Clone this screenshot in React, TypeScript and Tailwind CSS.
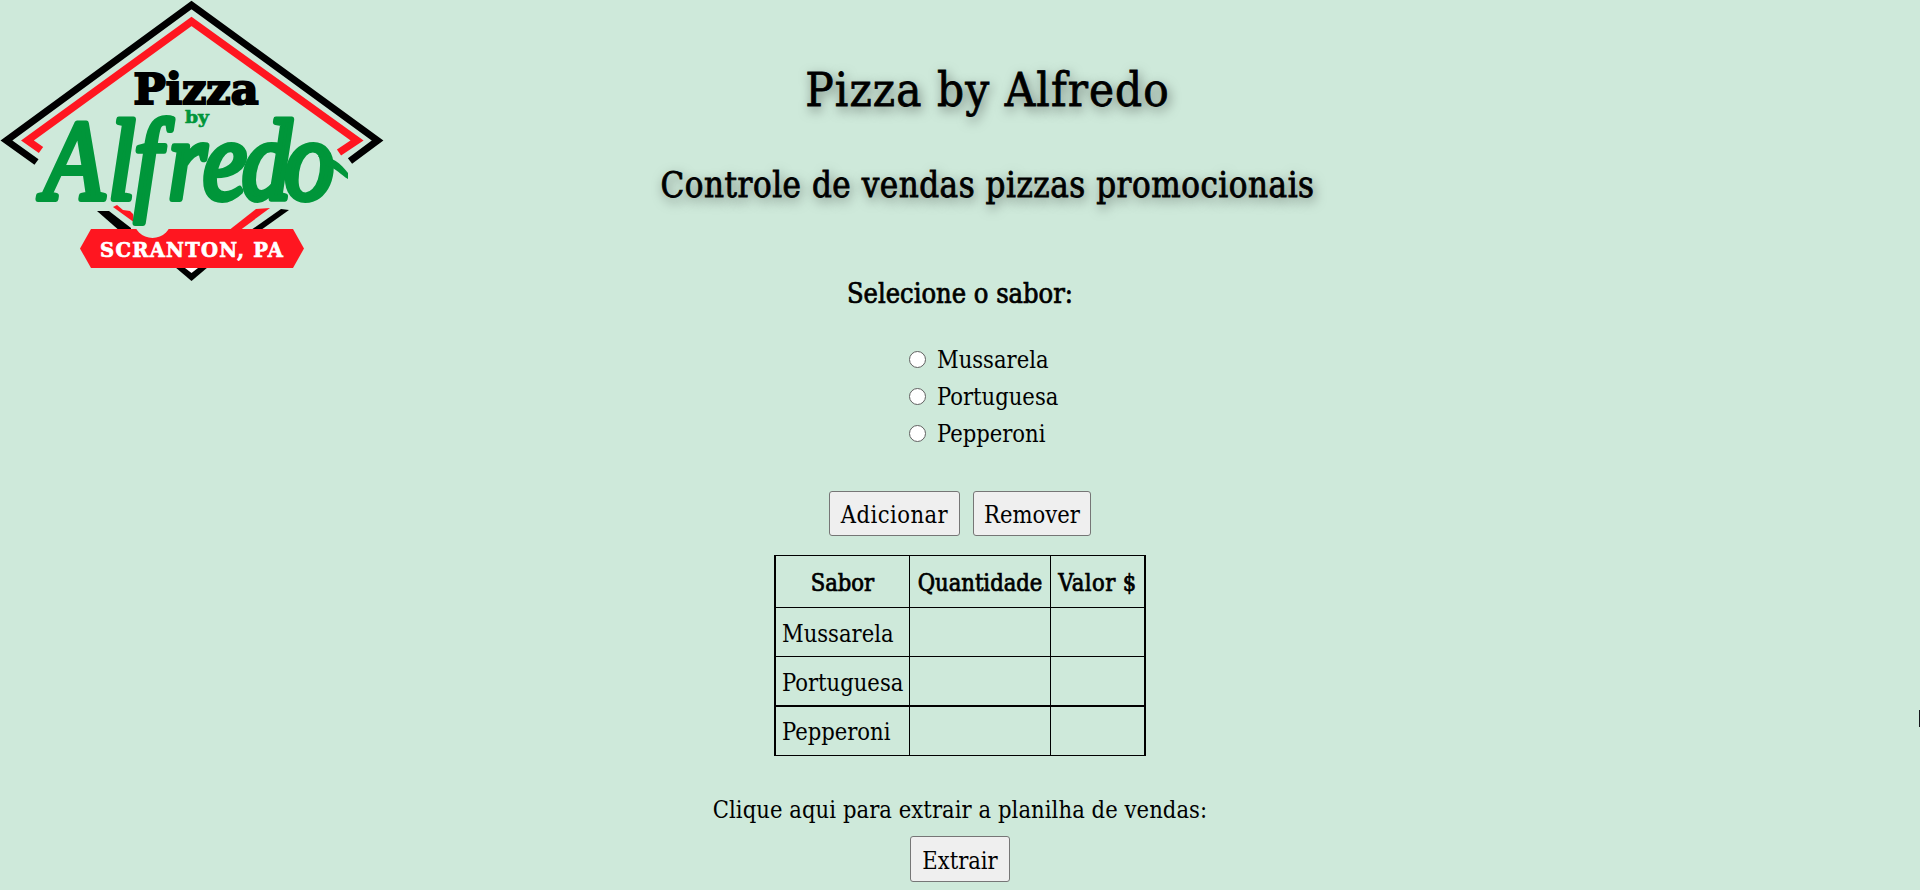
import type { ReactNode } from "react";

const flavors = ["Mussarela", "Portuguesa", "Pepperoni"];

function Logo() {
  return (
    <svg width="384" height="281" viewBox="0 0 384 281" className="block shrink-0 overflow-visible">
      <g fill="none" strokeMiterlimit="10">
        <path d="M36.5 162 L6.5 140.5 L191.500 5 L377.500 140.500 L350 161" stroke="#000" strokeWidth="7" />
        <path d="M41 150 L27.500 140.500 L191.500 21.500 L357 140.500 L339 152.500" stroke="#ff1620" strokeWidth="7.500" />
      </g>
      <path d="M97 211h12l22 17v4h-10z" fill="#000" />
      <path d="M113 207l4-2 6 5 7 1 3 3 2 9z" fill="#ff1620" />
      <path d="M256 209l14-1-31 23h-11z" fill="#ff1620" />
      <path d="M281 209l8 1-28 20h-10z" fill="#000" />
      <path d="M175 267h33l-16.500 14z" fill="#000" />
      <path d="M185 268h13l-6.500 5z" fill="#fff" />
      <path d="M91 229H293L304 248.500L293 268H91L80 248.500Z" fill="#ff1620" />
      <circle cx="152.500" cy="219" r="19" fill="#cee9da" />
      <text x="133.500" y="104" textLength="125" lengthAdjust="spacingAndGlyphs" fontFamily="DejaVu Serif" fontWeight="700" fontSize="43" stroke="#000" strokeWidth="2.200">Pizza</text>
      <text x="185" y="123" textLength="24" lengthAdjust="spacingAndGlyphs" fontFamily="DejaVu Serif" fontWeight="700" fontSize="17" fill="#00963a" stroke="#00963a" strokeWidth="0.600">by</text>
      <text
        transform="scale(0.87 1)"
        x="50 124 154 193 233 278 327"
        y="199"
        fontFamily="Liberation Serif"
        fontStyle="italic"
        fontSize="114"
        fill="#00963a"
        stroke="#00963a"
        strokeWidth="6"
        strokeLinejoin="round"
      >
        Alfredo
      </text>
      <path d="M318 156C330 155 341 163 348 173V179C341 175 336 168 327 166Z" fill="#00963a" />
      <text x="100" y="256.500" textLength="183" fontFamily="DejaVu Serif" fontWeight="700" fontSize="19.500" fill="#fff" stroke="#fff" strokeWidth="0.700">SCRANTON, PA</text>
    </svg>
  );
}

function Button({ className, children }: { className: string; children: ReactNode }) {
  return (
    <button
      type="button"
      className={`flex items-center justify-center rounded-[3px] border border-[#767676] bg-[#efefef] pt-[5px] leading-none whitespace-nowrap ${className}`}
    >
      {children}
    </button>
  );
}

const cell = "border-r border-b border-black p-0";

export default function App() {
  return (
    <div className="relative h-[890px] overflow-hidden bg-[#cee9da] font-['DejaVu_Serif_Condensed','DejaVu_Serif',serif] text-[23.5px] text-black">
      <header className="flex h-[276px]">
        <Logo />
        <div className="w-[1207px] pt-[62px] text-center whitespace-nowrap [-webkit-text-stroke:0.8px_black] [text-shadow:2px_4px_12px_rgba(0,0,0,0.55)]">
          <h1 className="text-[47px] leading-[56px] tracking-[1.1px]">Pizza by Alfredo</h1>
          <h2 className="mt-[47px] text-[34.5px] leading-[40px] tracking-[0.55px]">Controle de vendas pizzas promocionais</h2>
        </div>
      </header>

      <main className="flex flex-col items-center">
        <h3 className="text-[27px] leading-9 [-webkit-text-stroke:0.7px_black]">Selecione o sabor:</h3>
        <div className="mt-[30px] ml-[48px] w-[150px]">
          {flavors.map((flavor) => (
            <label key={flavor} className="flex h-[37px] items-center leading-[37px]">
              <input type="radio" name="flavor" className="mr-[11px] mb-[3px] size-[17px] shrink-0 appearance-none rounded-full border border-[#606060] bg-white" />
              {flavor}
            </label>
          ))}
        </div>

        <div className="mt-[38px] flex gap-[13px]">
          <Button className="h-[45px] w-[131px] tracking-[0.45px]">Adicionar</Button>
          <Button className="h-[45px] w-[118px]">Remover</Button>
        </div>

        <table className="mt-[19px] w-[372px] table-fixed border-separate border-spacing-0 border-x-2 border-t border-black">
          <colgroup>
            <col className="w-[134px]" />
            <col className="w-[141px]" />
            <col className="w-[93px]" />
          </colgroup>
          <thead>
            <tr className="h-[52px] [-webkit-text-stroke:0.7px_black]">
              <th className={`${cell} pt-[5px] font-normal`}>Sabor</th>
              <th className={`${cell} pt-[5px] font-normal`}>Quantidade</th>
              <th className="border-b border-black p-0 pt-[5px] font-normal tracking-[0.4px]">Valor $</th>
            </tr>
          </thead>
          <tbody>
            <tr className="h-[49px]">
              <td className={`${cell} pt-[5px] pl-[6px]`}>Mussarela</td>
              <td className={cell} />
              <td className="border-b border-black" />
            </tr>
            <tr className="h-[50px]">
              <td className="border-r border-b-2 border-black p-0 pt-[5px] pl-[6px]">Portuguesa</td>
              <td className="border-r border-b-2 border-black" />
              <td className="border-b-2 border-black" />
            </tr>
            <tr className="h-[49px]">
              <td className={`${cell} pt-[4px] pl-[6px]`}>Pepperoni</td>
              <td className={cell} />
              <td className="border-b border-black" />
            </tr>
          </tbody>
        </table>

        <p className="mt-9 leading-9 tracking-[0.07px] whitespace-nowrap">Clique aqui para extrair a planilha de vendas:</p>
        <Button className="mt-2 h-[46px] w-[100px]">Extrair</Button>
      </main>

      <div className="absolute top-[710px] right-0 h-[17px] w-px bg-[#16181d]" />
    </div>
  );
}
